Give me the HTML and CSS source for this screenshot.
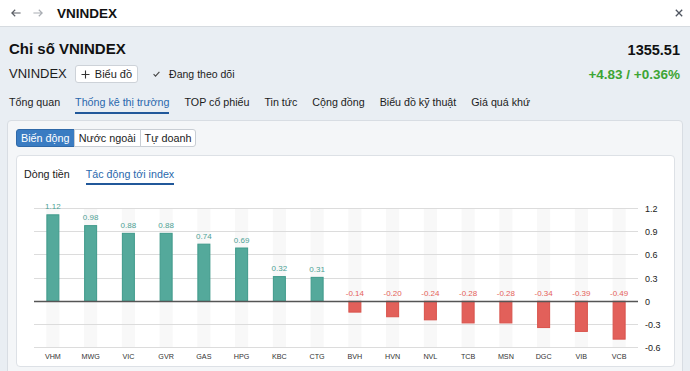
FILE: index.html
```html
<!DOCTYPE html>
<html lang="vi">
<head>
    <meta charset="UTF-8">
    <meta name="viewport" content="width=device-width, initial-scale=1.0">
    <title>VNINDEX</title>
    <link rel="stylesheet" href="styles.css">
</head>
<body>
    <div class="topbar">
        <span class="nav-arrow back">
            <svg width="10" height="8" viewBox="0 0 10 8"><path d="M0.8 4H9.6M4.2 0.7L0.8 4l3.4 3.3" /></svg>
        </span>
        <span class="nav-arrow fwd">
            <svg width="10" height="8" viewBox="0 0 10 8"><path d="M0.4 4H9.2M5.8 0.7L9.2 4l-3.4 3.3" /></svg>
        </span>
        <span class="topbar-title">VNINDEX</span>
        <span class="close-btn">
            <svg width="8" height="8" viewBox="0 0 8 8"><path d="M0.8 0.8l6.4 6.4M7.2 0.8l-6.4 6.4" /></svg>
        </span>
    </div>

    <div class="header">
        <div class="title-row">
            <h1>Chỉ số VNINDEX</h1>
            <div class="price">1355.51</div>
        </div>
        <div class="sub-row">
            <div class="sub-left">
                <span class="symbol">VNINDEX</span>
                <button class="chart-btn">
                    <svg width="9" height="9" viewBox="0 0 9 9"><path d="M4.5 0.5v8M0.5 4.5h8" /></svg>
                    Biểu đồ
                </button>
                <span class="follow">
                    <svg width="7" height="6" viewBox="0 0 7 6"><path d="M0.6 3.2l1.9 1.9L6.4 0.8" /></svg>
                    Đang theo dõi
                </span>
            </div>
            <div class="change">+4.83 / +0.36%</div>
        </div>
        <div class="tabs">
            <span class="tab">Tổng quan</span>
            <span class="tab active">Thống kê thị trường</span>
            <span class="tab">TOP cổ phiếu</span>
            <span class="tab">Tin tức</span>
            <span class="tab">Cộng đồng</span>
            <span class="tab">Biểu đồ kỹ thuật</span>
            <span class="tab">Giá quá khứ</span>
        </div>
    </div>

    <div class="panel">
        <div class="seg">
            <button class="seg-btn active">Biến động</button>
            <button class="seg-btn">Nước ngoài</button>
            <button class="seg-btn">Tự doanh</button>
        </div>
        <div class="card">
            <div class="card-tabs">
                <span class="card-tab">Dòng tiền</span>
                <span class="card-tab active">Tác động tới index</span>
            </div>
            <svg id="chart" width="657" height="181" viewBox="17 186 657 181"></svg>
        </div>
    </div>

    <script>
        const data = [
            ["VHM", 1.12], ["MWG", 0.98], ["VIC", 0.88], ["GVR", 0.88],
            ["GAS", 0.74], ["HPG", 0.69], ["KBC", 0.32], ["CTG", 0.31],
            ["BVH", -0.14], ["HVN", -0.20], ["NVL", -0.24], ["TCB", -0.28],
            ["MSN", -0.28], ["DGC", -0.34], ["VIB", -0.39], ["VCB", -0.49]
        ];
        const ticks = [1.2, 0.9, 0.6, 0.3, 0, -0.3, -0.6];

        const plotLeft = 34, plotRight = 638;
        const zero = 302.3, unit = 77.22;
        const band = (plotRight - plotLeft) / data.length;
        const barW = 13;
        const yOf = v => zero - v * unit;
        const plotTop = Math.floor(yOf(1.2)) + 0.5;
        const plotBottom = Math.floor(yOf(-0.6)) + 0.5;

        let html = "";

        data.forEach((d, i) => {
            const cx = plotLeft + band * (i + 0.5);
            html += `<rect class="col-band" x="${cx - barW / 2}" y="${plotTop}" width="${barW}" height="${plotBottom - plotTop}"/>`;
        });

        ticks.forEach(v => {
            const y = Math.floor(yOf(v)) + 0.5;
            if (v !== 0) html += `<line class="grid-line" x1="${plotLeft}" x2="${plotRight}" y1="${y}" y2="${y}"/>`;
            html += `<text class="axis-label" x="645" y="${y + 3.2}">${v}</text>`;
        });

        data.forEach((d, i) => {
            const [name, v] = d;
            const cx = plotLeft + band * (i + 0.5);
            const y0 = yOf(Math.max(v, 0));
            const h = Math.abs(v) * unit;
            const cls = v >= 0 ? "up" : "down";
            html += `<rect class="bar ${cls}" x="${cx - barW / 2 + 0.5}" y="${y0}" width="${barW - 1}" height="${h}"/>`;
            const ly = v >= 0 ? y0 - 5.5 : zero - 5.5;
            html += `<text class="value-label ${cls}" x="${cx}" y="${ly}">${v.toFixed(2)}</text>`;
            html += `<text class="cat-label" x="${cx}" y="360">${name}</text>`;
        });

        const zy = Math.floor(zero) + 0.5;
        html += `<line class="zero-line" x1="${plotLeft}" x2="${plotRight}" y1="${zy}" y2="${zy}"/>`;

        document.getElementById("chart").innerHTML = html;
    </script>
</body>
</html>
```

FILE: styles.css
```css
* {
    box-sizing: border-box;
    font-family: "Liberation Sans", Arial, sans-serif;
}

body {
    margin: 0;
    background-color: #e9eef3;
    color: #1c1c1c;
}

button {
    font-family: inherit;
    cursor: pointer;
}

/* top bar */

.topbar {
    display: flex;
    align-items: center;
    height: 27px;
    padding: 0 7px 0 11px;
    background-color: #fff;
    border-bottom: 1px solid #d6dbe0;
}

.nav-arrow svg,
.close-btn svg {
    display: block;
    fill: none;
    stroke-width: 1.2;
}

.nav-arrow.back svg {
    stroke: #5b5f66;
}

.nav-arrow.fwd {
    margin-left: 12px;
}

.nav-arrow.fwd svg {
    stroke: #a9adb3;
}

.topbar-title {
    margin-left: 14px;
    font-size: 13.5px;
    font-weight: 700;
    color: #111;
}

.close-btn {
    margin-left: auto;
}

.close-btn svg {
    stroke: #4f5560;
    stroke-width: 1.3;
}

/* header */

.header {
    padding: 0 10px 0 9px;
}

.title-row {
    display: flex;
    justify-content: space-between;
    align-items: center;
    padding-top: 12px;
    height: 32px;
}

.title-row h1 {
    margin: 0;
    font-size: 15px;
    line-height: 20px;
    font-weight: 700;
    color: #111;
}

.price {
    padding-top: 2px;
    font-size: 14.5px;
    font-weight: 700;
    color: #111;
}

.sub-row {
    display: flex;
    justify-content: space-between;
    align-items: center;
    margin-top: 6px;
    height: 18px;
}

.sub-left {
    display: flex;
    align-items: center;
}

.symbol {
    font-size: 13px;
    line-height: 18px;
}

.chart-btn {
    display: inline-flex;
    align-items: center;
    gap: 5px;
    height: 18px;
    margin-left: 8px;
    padding: 0 5px 0 5px;
    border: 1px solid #cdd2d8;
    border-radius: 3px;
    background-color: #fff;
    font-size: 11px;
    color: #1c1c1c;
}

.chart-btn svg {
    fill: none;
    stroke: #333;
    stroke-width: 1.1;
}

.follow {
    display: flex;
    align-items: center;
    gap: 9px;
    margin-left: 15px;
    font-size: 10.5px;
}

.follow svg {
    fill: none;
    stroke: #444;
    stroke-width: 1.1;
}

.change {
    font-size: 13.5px;
    font-weight: 700;
    color: #3da534;
}

.tabs {
    display: flex;
    gap: 15px;
    margin-top: 13px;
}

.tab {
    font-size: 10.7px;
    line-height: 13px;
    padding-bottom: 3px;
    border-bottom: 2px solid transparent;
    color: #1c1c1c;
}

.tab.active {
    color: #2a68ad;
    border-bottom-color: #21589a;
}

/* panel */

.panel {
    margin: 6px 7px 0 7px;
    padding: 8px 7px 8px 8px;
    background-color: #f4f6f8;
    border: 1px solid #d8dde3;
    border-radius: 4px;
}

.seg {
    display: flex;
}

.seg-btn {
    height: 18px;
    padding: 0 4px;
    margin-left: -1px;
    border: 1px solid #c9ced4;
    background-color: #fff;
    font-size: 10.8px;
    color: #1c1c1c;
}

.seg-btn:first-child {
    margin-left: 0;
    border-radius: 3px 0 0 3px;
}

.seg-btn:last-child {
    border-radius: 0 3px 3px 0;
}

.seg-btn.active {
    background-color: #3a7cc2;
    border-color: #2f69a8;
    color: #fff;
}

.card {
    margin-top: 8px;
    background-color: #fff;
    border: 1px solid #dde1e6;
    border-radius: 4px;
}

.card-tabs {
    display: flex;
    gap: 16px;
    padding: 12px 0 0 7px;
}

.card-tab {
    font-size: 10.7px;
    line-height: 13px;
    padding-bottom: 2px;
    border-bottom: 2px solid transparent;
}

.card-tab.active {
    color: #2a68ad;
    border-bottom-color: #21589a;
}

#chart {
    display: block;
}

/* chart */

.col-band {
    fill: #f8f8f8;
}

.grid-line {
    stroke: #dcdcdc;
    stroke-width: 1;
}

.zero-line {
    stroke: #555;
    stroke-width: 1.3;
}

.axis-label {
    font-size: 9px;
    fill: #222;
}

.bar.up {
    fill: #54a99b;
    stroke: #3f9a8b;
    stroke-width: 1;
}

.bar.down {
    fill: #e2605a;
    stroke: #d9524b;
    stroke-width: 1;
}

.value-label {
    font-size: 8px;
    text-anchor: middle;
}

.value-label.up {
    fill: #4ea295;
}

.value-label.down {
    fill: #e5625a;
}

.cat-label {
    font-size: 7.2px;
    text-anchor: middle;
    fill: #333;
}
```
